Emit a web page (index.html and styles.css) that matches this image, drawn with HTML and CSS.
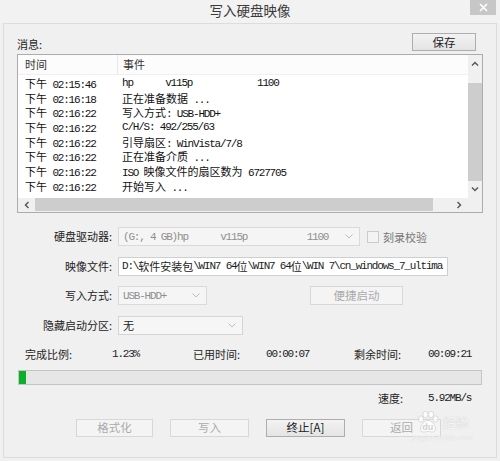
FILE: index.html
```html
<!DOCTYPE html>
<html lang="zh-CN">
<head>
<meta charset="utf-8">
<title>写入硬盘映像</title>
<link rel="stylesheet" href="styles.css">
</head>
<body>
<div class="titlebar">
  <span></span>
  <span class="title">写入硬盘映像</span>
  <div class="close"><svg width="9" height="9" viewBox="0 0 9 9"><path d="M1 1L8 8M8 1L1 8" stroke="#fff" stroke-width="1.6"/></svg></div>
</div>
<div class="panel">
  <div class="msg-head"><span class="lbl">消息:</span><button class="btn save">保存</button></div>
  <div class="listbox">
    <div class="lv">
      <div class="lv-head"><div class="c1">时间</div><div class="c2">事件</div></div>
      <div class="lv-rows">
        <div class="lv-row"><div class="c1"><span class="zh">下午</span> 02:15:46</div><div class="c2">hp      v115p            1100</div></div>
        <div class="lv-row"><div class="c1"><span class="zh">下午</span> 02:16:18</div><div class="c2"><span class="zh">正在准备数据</span> ...</div></div>
        <div class="lv-row"><div class="c1"><span class="zh">下午</span> 02:16:22</div><div class="c2"><span class="zh">写入方式</span>: USB-HDD+</div></div>
        <div class="lv-row"><div class="c1"><span class="zh">下午</span> 02:16:22</div><div class="c2">C/H/S: 492/255/63</div></div>
        <div class="lv-row"><div class="c1"><span class="zh">下午</span> 02:16:22</div><div class="c2"><span class="zh">引导扇区</span>: WinVista/7/8</div></div>
        <div class="lv-row"><div class="c1"><span class="zh">下午</span> 02:16:22</div><div class="c2"><span class="zh">正在准备介质</span> ...</div></div>
        <div class="lv-row"><div class="c1"><span class="zh">下午</span> 02:16:22</div><div class="c2">ISO <span class="zh">映像文件的扇区数为</span> 6727705</div></div>
        <div class="lv-row"><div class="c1"><span class="zh">下午</span> 02:16:22</div><div class="c2"><span class="zh">开始写入</span> ...</div></div>
      </div>
    </div>
    <div class="vscroll">
      <div class="arrow"><svg width="8" height="5" viewBox="0 0 8 5"><path d="M1 4.5L4 1.5L7 4.5" fill="none" stroke="#5a5a5a" stroke-width="1.5"/></svg></div>
      <div class="vtrack"><div class="thumb"></div></div>
      <div class="arrow"><svg width="8" height="5" viewBox="0 0 8 5"><path d="M1 0.5L4 3.5L7 0.5" fill="none" stroke="#5a5a5a" stroke-width="1.5"/></svg></div>
    </div>
    <div class="hscroll">
      <div class="arrow"><svg width="5" height="8" viewBox="0 0 5 8"><path d="M4.5 1L1.5 4L4.5 7" fill="none" stroke="#5a5a5a" stroke-width="1.5"/></svg></div>
      <div class="htrack"><div class="thumb"></div></div>
      <div class="arrow"><svg width="5" height="8" viewBox="0 0 5 8"><path d="M0.5 1L3.5 4L0.5 7" fill="none" stroke="#5a5a5a" stroke-width="1.5"/></svg></div>
    </div>
    <div class="corner"></div>
  </div>

  <div class="form">
    <div class="l">硬盘驱动器:</div>
    <div class="ctl">
      <div class="sel w-drive"><span>(G:, 4 GB)hp      v115p           1100</span><svg class="dd" width="8" height="5" viewBox="0 0 8 5"><path d="M0.5 0.5L4 4L7.5 0.5" fill="none" stroke="#bdbdbd" stroke-width="1"/></svg></div>
      <div class="chk"></div><span class="chk-l">刻录校验</span>
    </div>
    <div class="l">映像文件:</div>
    <div class="ctl">
      <div class="inp">D:\<span class="zh">软件安装包</span>\WIN7 64<span class="zh">位</span>\WIN7 64<span class="zh">位</span>\WIN 7\cn_windows_7_ultima</div>
    </div>
    <div class="l">写入方式:</div>
    <div class="ctl">
      <div class="sel w-mode"><span>USB-HDD+</span><svg class="dd" width="8" height="5" viewBox="0 0 8 5"><path d="M0.5 0.5L4 4L7.5 0.5" fill="none" stroke="#bdbdbd" stroke-width="1"/></svg></div>
      <button class="btn dis quick">便捷启动</button>
    </div>
    <div class="l">隐藏启动分区:</div>
    <div class="ctl">
      <div class="sel on w-hide"><span class="zh">无</span><svg class="dd" width="8" height="5" viewBox="0 0 8 5"><path d="M0.5 0.5L4 4L7.5 0.5" fill="none" stroke="#bdbdbd" stroke-width="1"/></svg></div>
    </div>
  </div>

  <div class="stats">
    <span class="k">完成比例:</span><span class="m">1.23%</span>
    <span class="k">已用时间:</span><span class="m">00:00:07</span>
    <span class="k">剩余时间:</span><span class="m">00:09:21</span>
  </div>

  <div class="progress"><div class="fill" style="width:7px"></div></div>

  <div class="stats speed">
    <span class="k">速度:</span><span class="m">5.92MB/s</span>
  </div>

  <div class="buttons">
    <button class="btn dis b1">格式化</button>
    <button class="btn dis">写入</button>
    <button class="btn">终止[A]</button>
    <button class="btn dis">返回</button>
  </div>
</div>
<div class="watermark">
  <div class="wm-top">
    <div class="paw">
      <svg width="24" height="22" viewBox="0 0 24 22"><g fill="rgba(255,255,255,0.8)" stroke="#d2d2d2" stroke-width="0.8"><ellipse cx="5" cy="8" rx="2.6" ry="3.2"/><ellipse cx="9.5" cy="3.5" rx="2.6" ry="3.2"/><ellipse cx="15" cy="3.5" rx="2.6" ry="3.2"/><ellipse cx="19.5" cy="8" rx="2.6" ry="3.2"/><path d="M12 9.5C8 9.5 5 14 4.5 17C4 20 6.5 21.5 8.5 21C10 20.6 11 20.3 12 20.3C13 20.3 14 20.6 15.5 21C17.5 21.5 20 20 19.5 17C19 14 16 9.5 12 9.5Z"/></g></svg>
      <span class="du">du</span>
    </div>
    <span class="wm-zh">经验</span>
  </div>
  <span class="wm-small">jingyan.baidu.com</span>
</div>
</body>
</html>
```

FILE: styles.css
```css
html, body {
  margin: 0;
  padding: 0;
}
body {
  width: 500px;
  height: 461px;
  overflow: hidden;
  position: relative;
  background: #f0f0f0;
  font-family: "Noto Sans CJK SC", sans-serif;
  font-size: 11px;
  color: #222;
}

.titlebar {
  height: 23px;
  display: grid;
  grid-template-columns: 1fr auto 1fr;
  background: #f2f2f2;
}
.title {
  font-size: 13.5px;
  line-height: 21px;
  color: #3a3a3a;
}
.close {
  justify-self: end;
  width: 26px;
  height: 15px;
  margin-right: 4px;
  background: #c7c7c7;
  display: flex;
  align-items: center;
  justify-content: center;
}

.panel {
  margin: 0 3px;
  height: 435px;
  box-sizing: border-box;
  border: 1px solid #dcdcdc;
  padding: 0 13px;
  background: #f0f0f0;
}

.msg-head {
  display: flex;
  justify-content: space-between;
  align-items: flex-end;
  margin-top: 9px;
  height: 18px;
}
.msg-head .lbl {
  line-height: 14px;
  color: #222;
}

.btn {
  box-sizing: border-box;
  height: 18px;
  padding: 0;
  border: 1px solid #adadad;
  background: linear-gradient(#f3f3f3, #e4e4e4);
  font-family: "Noto Sans CJK SC", sans-serif;
  font-size: 11.5px;
  line-height: 15px;
  color: #222;
  text-align: center;
}
.btn.dis {
  border-color: #d7d7d7;
  background: #f4f4f4;
  color: #ababab;
}
.save {
  width: 64px;
  margin-right: 7px;
}

.listbox {
  margin-top: 3px;
  height: 159px;
  box-sizing: border-box;
  border: 1px solid #acacac;
  background: #fff;
  display: grid;
  grid-template-columns: 1fr 14px;
  grid-template-rows: 1fr 14px;
}
.lv {
  overflow: hidden;
}
.lv-head {
  display: flex;
  height: 20px;
  box-sizing: border-box;
  border-bottom: 1px solid #efefef;
  background: #fcfcfc;
  line-height: 19px;
  color: #333;
}
.lv-head .c1 {
  width: 100px;
  box-sizing: border-box;
  padding-left: 7px;
  border-right: 1px solid #e6e6e6;
}
.lv-head .c2 {
  padding-left: 5px;
}
.lv-rows {
  padding-top: 1px;
  font-family: "Liberation Mono", monospace;
  font-size: 11px;
  letter-spacing: -1.2px;
  line-height: 14.7px;
  color: #111;
}
.lv-row {
  display: flex;
  height: 14.7px;
}
.lv-row .c1,
.lv-row .c2 {
  white-space: pre;
}
.lv-row .c1 {
  width: 100px;
  box-sizing: border-box;
  padding-left: 7px;
}
.lv-row .c2 {
  padding-left: 4px;
}
.zh {
  font-family: "Noto Sans CJK SC", sans-serif;
  letter-spacing: 0;
}

.vscroll {
  background: #f0f0f0;
  display: grid;
  grid-template-rows: 17px 1fr 17px;
}
.arrow {
  display: flex;
  align-items: center;
  justify-content: center;
}
.vtrack {
  padding-top: 11px;
  display: flex;
}
.vtrack .thumb {
  flex: 1;
  background: #cdcdcd;
}
.hscroll {
  background: #f0f0f0;
  display: grid;
  grid-template-columns: 17px 1fr 17px;
}
.htrack {
  display: flex;
  padding-bottom: 1px;
}
.htrack .thumb {
  width: 398px;
  background: #cdcdcd;
}
.corner {
  background: #f0f0f0;
}

.form {
  margin-top: 14px;
  display: grid;
  grid-template-columns: 95px 1fr;
  column-gap: 6px;
  row-gap: 10.5px;
}
.form .l {
  text-align: right;
  line-height: 19px;
  color: #222;
}
.ctl {
  display: flex;
  align-items: center;
  height: 19px;
}
.sel, .inp {
  box-sizing: border-box;
  height: 19px;
  display: flex;
  align-items: center;
  font-family: "Liberation Mono", monospace;
  font-size: 11px;
  letter-spacing: -1.2px;
  white-space: pre;
}
.sel {
  justify-content: space-between;
  padding: 0 6px 0 4px;
  border: 1px solid #dadada;
  background: #f5f5f5;
  color: #8f8f8f;
}
.sel.on {
  color: #222;
  border-color: #d4d4d4;
  background: #f6f6f6;
}
.w-drive { width: 242px; }
.w-mode { width: 89px; }
.w-hide { width: 125px; }
.inp {
  width: 330px;
  padding-left: 3px;
  border: 1px solid #cfcfcf;
  background: #fff;
  color: #222;
  overflow: hidden;
}
.chk {
  width: 12px;
  height: 12px;
  box-sizing: border-box;
  margin-left: 7px;
  border: 1px solid #cbcbcb;
  background: #f3f3f3;
}
.chk-l {
  margin-left: 4px;
  color: #777;
}
.quick {
  width: 93px;
  height: 19px;
  margin-left: 103px;
}

.stats {
  margin-top: 12px;
  padding-left: 8px;
  display: grid;
  grid-template-columns: 87px 81px 73px 88px 74px 1fr;
  line-height: 14px;
}
.stats .k {
  color: #1e1e1e;
}
.m {
  font-family: "Liberation Mono", monospace;
  font-size: 11px;
  letter-spacing: -1.2px;
  color: #222;
}
.speed {
  margin-top: 6px;
}
.speed .k {
  grid-column: 5;
  padding-left: 24px;
}

.progress {
  margin: 9px 1px 0;
  height: 15px;
  box-sizing: border-box;
  border: 1px solid #c4c4c4;
  background: #e6e6e6;
  display: flex;
}
.progress .fill {
  background: #0bb02a;
}

.buttons {
  margin-top: 14px;
  padding-left: 59px;
  display: flex;
  gap: 17px;
}
.buttons .btn {
  width: 79px;
}
.buttons .b1 {
  width: 77px;
}

.watermark {
  position: absolute;
  left: 412px;
  top: 411px;
  display: flex;
  flex-direction: column;
  align-items: center;
  pointer-events: none;
}
.wm-top {
  display: flex;
  align-items: center;
  gap: 3px;
}
.paw {
  display: grid;
}
.paw > * {
  grid-area: 1 / 1;
}
.du {
  align-self: end;
  justify-self: center;
  font-family: "Liberation Sans", sans-serif;
  font-size: 9px;
  line-height: 12px;
  font-weight: bold;
  color: #d0d0d0;
}
.wm-zh {
  font-size: 13px;
  line-height: 20px;
  color: rgba(255, 255, 255, 0.85);
  text-shadow: 0 0 1px #b8b8b8;
}
.wm-small {
  font-family: "Liberation Sans", sans-serif;
  font-size: 7.5px;
  line-height: 9px;
  color: rgba(255, 255, 255, 0.8);
  text-shadow: 0 0 1px #c8c8c8;
}
```
